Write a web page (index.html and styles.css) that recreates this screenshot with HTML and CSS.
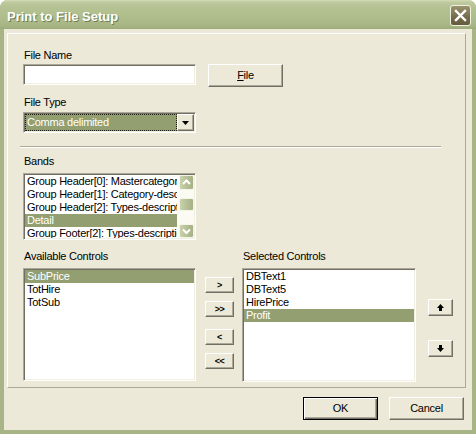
FILE: index.html
```html
<!DOCTYPE html>
<html>
<head>
<meta charset="utf-8">
<link rel="stylesheet" href="styles.css">
</head>
<body>
<div class="window">
  <div class="titlebar">
    <span class="title">Print to File Setup</span>
    <div class="close">
      <svg width="19" height="19" viewBox="0 0 19 19"><path d="M5 5 L14 14 M14 5 L5 14" stroke="#fff" stroke-width="2.4" stroke-linecap="square" fill="none"/></svg>
    </div>
  </div>
  <div class="client">
    <div class="panel">
      <div class="label lbl-filename">File Name</div>
      <div class="row">
        <div class="edit sunken"></div>
        <div class="btn btn-file"><span><u>F</u>ile</span></div>
      </div>
      <div class="label lbl-filetype">File Type</div>
      <div class="combo sunken">
        <div class="combo-sel"><span>Comma delimited</span></div>
        <div class="btn combo-btn">
          <svg width="7" height="4" viewBox="0 0 7 4"><polygon points="0,0 7,0 3.5,4" fill="#000"/></svg>
        </div>
      </div>
      <div class="sep"></div>
      <div class="label lbl-bands">Bands</div>
      <div class="list bands sunken">
        <div class="items">
          <div class="item">Group Header[0]: Mastercategory-description</div>
          <div class="item">Group Header[1]: Category-description</div>
          <div class="item">Group Header[2]: Types-description</div>
          <div class="item sel">Detail</div>
          <div class="item">Group Footer[2]: Types-description</div>
        </div>
        <div class="vscroll">
          <div class="sb-btn sb-up"><svg width="13" height="13" viewBox="0 0 13 13"><polyline points="3,8 6.5,4.5 10,8" stroke="#fff" stroke-width="2" fill="none"/></svg></div>
          <div class="sb-btn sb-thumb"></div>
          <div class="sb-btn sb-down"><svg width="13" height="12" viewBox="0 0 13 12"><polyline points="3,4.5 6.5,8 10,4.5" stroke="#fff" stroke-width="2" fill="none"/></svg></div>
        </div>
      </div>
      <div class="controls">
        <div class="col col-avail">
          <div class="label">Available Controls</div>
          <div class="list list-avail sunken">
            <div class="items">
              <div class="item sel">SubPrice</div>
              <div class="item">TotHire</div>
              <div class="item">TotSub</div>
            </div>
          </div>
        </div>
        <div class="movebtns">
          <div class="btn mv">&gt;</div>
          <div class="btn mv">&gt;&gt;</div>
          <div class="btn mv mv-gap">&lt;</div>
          <div class="btn mv">&lt;&lt;</div>
        </div>
        <div class="col col-sel">
          <div class="label">Selected Controls</div>
          <div class="list list-sel sunken">
            <div class="items">
              <div class="item">DBText1</div>
              <div class="item">DBText5</div>
              <div class="item">HirePrice</div>
              <div class="item sel">Profit</div>
            </div>
          </div>
        </div>
        <div class="updown">
          <div class="btn ud">
            <svg width="7" height="7" viewBox="0 0 7 7"><polygon points="3.5,0 7,4 5,4 5,7 2,7 2,4 0,4" fill="#000"/></svg>
          </div>
          <div class="btn ud ud-down">
            <svg width="7" height="7" viewBox="0 0 7 7"><polygon points="2,0 5,0 5,3 7,3 3.5,7 0,3 2,3" fill="#000"/></svg>
          </div>
        </div>
      </div>
    </div>
    <div class="footer">
      <div class="btn btn-ok"><span>OK</span></div>
      <div class="btn btn-cancel"><span>Cancel</span></div>
    </div>
  </div>
</div>
</body>
</html>
```
FILE: styles.css
```css
body {
  margin: 0;
  background: #ffffff;
}

.window {
  width: 476px;
  height: 434px;
  display: flex;
  flex-direction: column;
  background: #a7b586;
  border-radius: 8px 8px 0 0;
  overflow: hidden;
  font-family: "Liberation Sans", Arial, sans-serif;
  font-size: 11px;
  letter-spacing: -0.25px;
  color: #000;
}

.titlebar {
  height: 29px;
  flex: none;
  display: flex;
  align-items: flex-start;
  padding-left: 7px;
  background: linear-gradient(to bottom, #d3dcb9 0px, #bfcaa0 2px, #b5c293 7px, #afbd8c 18px, #a7b584 26px, #9caa79 29px);
}

.title {
  margin-top: 9px;
  font-weight: bold;
  font-size: 13px;
  line-height: 15px;
  letter-spacing: 0;
  color: #ffffff;
  text-shadow: 1px 1px 0 #6f7c52;
}

.close {
  margin-left: auto;
  margin-right: 5px;
  margin-top: 5px;
  width: 21px;
  height: 21px;
  box-sizing: border-box;
  border: 1px solid #eef0e0;
  border-radius: 3px;
  background: linear-gradient(to bottom, #9a936f, #766d4c 55%, #635b3d);
  display: flex;
  align-items: center;
  justify-content: center;
}

.client {
  flex: 1;
  margin: 0 4px 4px 4px;
  background: #ece9d8;
  display: flex;
  flex-direction: column;
}

.panel {
  margin: 4px 0 0 3px;
  width: 459px;
  height: 355px;
  box-sizing: border-box;
  border: 1px solid;
  border-color: #ffffff #aca899 #aca899 #ffffff;
  padding-left: 15px;
  display: flex;
  flex-direction: column;
  align-items: flex-start;
}

.label {
  line-height: 13px;
  padding-left: 1px;
  white-space: nowrap;
}

.lbl-filename { margin-top: 15px; }
.lbl-filetype { margin-top: 9px; }
.lbl-bands { margin-top: 7px; }

.sunken {
  box-sizing: border-box;
  border: 1px solid;
  border-color: #aca899 #ffffff #ffffff #aca899;
  box-shadow: inset 1px 1px 0 #716f64, inset -1px -1px 0 #f1efe2;
  padding: 1px;
  background: #ffffff;
}

.btn {
  box-sizing: border-box;
  background: #ece9d8;
  border: 1px solid;
  border-color: #ffffff #716f64 #716f64 #ffffff;
  box-shadow: inset -1px -1px 0 #aca899;
  display: flex;
  align-items: center;
  justify-content: center;
  line-height: 13px;
}

.row {
  margin-top: 2px;
  display: flex;
  gap: 12px;
  height: 23px;
  align-items: flex-start;
}

.edit {
  width: 173px;
  height: 21px;
}

.btn-file {
  width: 75px;
  height: 23px;
}

.combo {
  margin-top: 3px;
  width: 173px;
  height: 21px;
  display: flex;
}

.combo-sel {
  flex: 1;
  box-sizing: border-box;
  background: #939f70;
  border: 1px dotted #1c1c10;
  color: #ffffff;
  display: flex;
  align-items: center;
  padding-left: 1px;
  line-height: 13px;
}

.combo-btn {
  width: 17px;
  height: 17px;
}

.sep {
  margin-top: 13px;
  margin-left: -3px;
  width: 421px;
  height: 0;
  border-top: 1px solid #aca899;
  border-bottom: 1px solid #ffffff;
}

.list {
  display: flex;
  overflow: hidden;
}

.bands {
  margin-top: 5px;
  width: 173px;
  height: 67px;
}

.items {
  flex: 1;
  overflow: hidden;
  background: #ffffff;
}

.item {
  height: 13px;
  line-height: 13px;
  padding-left: 2px;
  white-space: nowrap;
  overflow: hidden;
}

.item.sel {
  background: #939f70;
  color: #ffffff;
}

.vscroll {
  width: 17px;
  flex: none;
  background: #fbfbf3;
  display: flex;
  flex-direction: column;
  align-items: flex-end;
}

.sb-btn {
  width: 15px;
  box-sizing: border-box;
  border: 1px solid #f3f5e8;
  border-radius: 2px;
  background: linear-gradient(to right, #c9d2ac, #b3bd93 60%, #a6b185);
  display: flex;
  align-items: center;
  justify-content: center;
}

.sb-up { height: 15px; }
.sb-thumb { height: 13px; margin-top: 8px; }
.sb-down { height: 14px; margin-top: auto; }

.controls {
  margin-top: 10px;
  display: flex;
  align-items: flex-start;
}

.col {
  display: flex;
  flex-direction: column;
  align-items: flex-start;
}

.col-avail { width: 173px; }
.col-sel { width: 174px; margin-left: 8px; }

.list-avail {
  margin-top: 5px;
  width: 173px;
  height: 113px;
}

.list-sel {
  margin-top: 5px;
  width: 174px;
  height: 114px;
}

.movebtns {
  margin-left: 9px;
  padding-top: 27px;
  display: flex;
  flex-direction: column;
  gap: 8px;
}

.mv {
  width: 29px;
  height: 16px;
  font-weight: bold;
  font-size: 9px;
  letter-spacing: -0.5px;
}

.mv-gap { margin-top: 4px; }

.updown {
  margin-left: 12px;
  padding-top: 49px;
  display: flex;
  flex-direction: column;
}

.ud {
  width: 25px;
  height: 17px;
}

.ud-down { margin-top: 24px; }

.footer {
  display: flex;
  justify-content: flex-end;
  gap: 11px;
  padding: 9px 8px 0 0;
}

.btn-cancel {
  width: 75px;
  height: 23px;
}

.btn-ok {
  width: 75px;
  height: 23px;
  border: 1px solid #000000;
  box-shadow: inset 1px 1px 0 #ffffff, inset -1px -1px 0 #716f64, inset -2px -2px 0 #aca899;
}
```
